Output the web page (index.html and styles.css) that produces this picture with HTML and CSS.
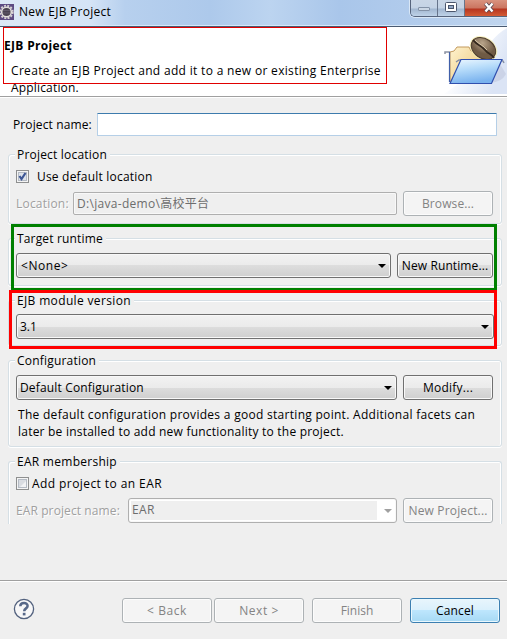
FILE: index.html
```
<!DOCTYPE html>
<html lang="en">
<head>
<meta charset="utf-8">
<title>New EJB Project</title>
<link rel="stylesheet" href="styles.css">
</head>
<body>
<div class="window">
  <header class="titlebar">
    <svg class="app-icon" width="14" height="16" viewBox="0 0 14 16"><rect width="14" height="16" fill="#5d4b82"/><circle cx="6.500" cy="8" r="6.300" fill="none" stroke="#d6d1d2" stroke-width="1.800" stroke-dasharray="2 1.300"/><circle cx="6.500" cy="8" r="4.800" fill="#4a4250" stroke="#e2dfdc" stroke-width="1.500"/><path d="M3 6.500h7M3 9h7" stroke="#625a6c"/></svg>
    <span class="title t-title">New EJB Project</span>
    <div class="captions">
      <span class="cap min"><i></i></span>
      <span class="cap max"><svg width="12" height="10" viewBox="0 0 12 10"><rect x=".5" y=".5" width="11" height="9" rx="1" fill="#fff" stroke="#4b566c"/><rect x="3.500" y="3.500" width="5" height="3" fill="#91a6c4" stroke="#4b566c"/></svg></span>
      <span class="cap close"><svg width="12" height="11" viewBox="0 0 12 11"><path d="M2.500 1.500L9.500 9.500M9.500 1.500L2.500 9.500" stroke="#554650" stroke-width="4"/><path d="M2.500 1.500L9.500 9.500M9.500 1.500L2.500 9.500" stroke="#fff" stroke-width="2.400"/></svg></span>
    </div>
  </header>
  <section class="banner">
    <div class="banner-text">
      <h1><span class="t-h1">EJB Project</span></h1>
      <p><span class="t-d1">Create an EJB Project and add it to a new or existing Enterprise</span><br><span class="t-d2">Application.</span></p>
    </div>
    <svg class="wizard" width="67" height="66" viewBox="0 0 67 66">
      <defs>
        <linearGradient id="bg" x1="0" y1="0" x2="1" y2=".5"><stop offset=".35" stop-color="#fff"/><stop offset="1" stop-color="#dbe4f5"/></linearGradient>
        <linearGradient id="tan" x1="0" y1="0" x2="1" y2="1"><stop stop-color="#fff3cf"/><stop offset="1" stop-color="#e9c477"/></linearGradient>
        <linearGradient id="blue" x1="0" y1="0" x2=".3" y2="1"><stop stop-color="#eef8ff"/><stop offset=".45" stop-color="#b7dcfa"/><stop offset="1" stop-color="#79b2ee"/></linearGradient>
        <radialGradient id="bean" cx=".35" cy=".3"><stop stop-color="#b9a58b"/><stop offset="1" stop-color="#6f5a44"/></radialGradient>
      </defs>
      <path d="M67 0V66H4Q38 44 50 15Q58 5 67 0" fill="url(#bg)"/>
      <path d="M50 55L60 36L66 46Q62 54 50 55" fill="#b9bfd8" opacity=".45"/>
      <path d="M5 26V24H10" stroke="#8c92a2" stroke-width="1.500" fill="none"/>
      <path d="M10 54V24L14 23L17 19H29L31 23H40V40L12 55Z" fill="url(#tan)" stroke="#c39a5e"/>
      <path d="M9.500 54V24" stroke="#405fa9" stroke-width="1.200"/>
      <path d="M16 34L19 32H22M60 32L63 33L64 35" stroke="#858ea3" stroke-width="1.500" fill="none"/>
      <ellipse cx="43.500" cy="20.500" rx="14.800" ry="11.300" transform="rotate(35 43.500 20.500)" fill="#f6edb1" opacity=".8"/>
      <ellipse cx="43.500" cy="20.500" rx="13.200" ry="9.800" transform="rotate(35 43.500 20.500)" fill="url(#bean)" stroke="#4d3d2e"/>
      <path d="M33 12C38 18 41 17 45 22C48 26 52 26 54 30" stroke="#33271c" stroke-width="1.800" fill="none"/>
      <path d="M35 12C40 17 43 17 47 22" stroke="#d8c8aa" fill="none"/>
      <path d="M21 31.500H62L51.500 55.500H10Z" fill="url(#blue)" stroke="#304fae" stroke-width="1.200"/>
    </svg>
  </section>
  <main class="content">
    <div class="row name-row">
      <label class="t-name">Project name:</label>
      <div class="input"></div>
    </div>
    <div class="group location">
      <div class="legend"><span class="t-ploc">Project location</span></div>
      <div class="check wide"><svg width="13" height="13" viewBox="0 0 13 13"><rect x=".5" y=".5" width="12" height="12" fill="#f4f4f4" stroke="#8e8f8f"/><rect x="2.500" y="2.500" width="8" height="8" fill="#dde2ea" stroke="#b5bbc4"/><path d="M3.500 6L5.500 9L9.500 3" fill="none" stroke="#3d5694" stroke-width="2.200"/></svg><span class="t-use">Use default location</span></div>
      <div class="row loc-row">
        <label class="off etched t-loc">Location:</label>
        <div class="input disabled"><span class="t-path">D:\java-demo\高校平台</span></div>
        <div class="btn off"><span class="t-browse">Browse...</span></div>
      </div>
    </div>
    <div class="group target">
      <div class="legend"><span class="t-target">Target runtime</span></div>
      <div class="row">
        <div class="combo runtime"><span class="t-none">&lt;None&gt;</span></div>
        <div class="btn new-runtime"><span class="t-newr">New Runtime...</span></div>
      </div>
    </div>
    <div class="group version">
      <div class="legend"><span class="t-ejb">EJB module version</span></div>
      <div class="row"><div class="combo ver"><span>3.1</span></div></div>
    </div>
    <div class="group config">
      <div class="legend"><span class="t-conf">Configuration</span></div>
      <div class="row">
        <div class="combo"><span class="t-def">Default Configuration</span></div>
        <div class="btn"><span class="t-mod">Modify...</span></div>
      </div>
      <p class="note"><span class="t-n1">The default configuration provides a good starting point. Additional facets can</span><br><span class="t-n2">later be installed to add new functionality to the project.</span></p>
    </div>
    <div class="group ear">
      <div class="legend"><span class="t-earm">EAR membership</span></div>
      <div class="check"><svg width="13" height="13" viewBox="0 0 13 13"><rect x=".5" y=".5" width="12" height="12" fill="#f4f4f4" stroke="#8e8f8f"/><rect x="2.500" y="2.500" width="8" height="8" fill="#d9dce1" stroke="#b5bbc4"/><path d="M10 4V10H4Z" fill="#f1f2f4"/></svg><span class="t-add">Add project to an EAR</span></div>
      <div class="row">
        <label class="off etched ear-label t-earn">EAR project name:</label>
        <div class="combo editable"><span class="field"><span class="t-ear">EAR</span></span></div>
        <div class="btn off"><span class="t-newp">New Project...</span></div>
      </div>
    </div>
    <div class="mark green"></div>
    <div class="mark red"></div>
  </main>
  <footer class="footer">
    <svg class="help" width="22" height="22" viewBox="0 0 22 22"><circle cx="11" cy="11" r="9.600" fill="#f7f7f8" stroke="#52617e" stroke-width="1.300"/><path d="M7.300 8.300C7.300 3.900 14.700 3.900 14.600 8C14.600 10.500 11.200 10.300 11.200 13.300" fill="none" stroke="#566788" stroke-width="2.500"/><rect x="9.800" y="14.800" width="2.700" height="2.600" fill="#566788"/></svg>
    <div class="btn off"><span class="t-back">&lt; Back</span></div>
    <div class="btn off next"><span class="t-next">Next &gt;</span></div>
    <div class="btn off finish"><span>Finish</span></div>
    <div class="btn cancel"><span class="t-can">Cancel</span></div>
  </footer>
  <div class="mark thin"></div>
</div>
</body>
</html>
```
FILE: styles.css
```
* { box-sizing: border-box; }
body { margin: 0; font: 12px/17px "Open Sans", "Noto Sans", "Noto Sans CJK SC", sans-serif; color: #000; }
svg { display: block; flex: none; }
span, label { white-space: nowrap; }
.window { position: relative; width: 507px; height: 639px; background: #efefef; display: flex; flex-direction: column; overflow: hidden; }

.titlebar { height: 27px; flex: none; display: flex; align-items: flex-start; border-bottom: 1px solid #4a5a71; background: linear-gradient(90deg, #dce8f6 0, #d5e4f6 90px, #b7d0ee 125px, #adc9eb 210px, #bcd4f0 270px, #a9c6ea 340px, #b2ccec 420px, #c0d5ee); box-shadow: inset 0 -1px #d7e7f8; }
.app-icon { margin-top: 4px; }
.title { margin: 3px 0 0 5px; }
.captions { display: flex; margin-left: auto; width: 97px; height: 17px; border: 1px solid #56647c; border-top: 0; border-right: 0; border-radius: 0 0 0 5px; overflow: hidden; box-shadow: 0 0 0 1px #d9e7f6; }
.cap { display: flex; justify-content: center; align-items: flex-start; padding-top: 2px; width: 27px; flex: none; background: linear-gradient(#c9d6e6 0, #c4d3e5 8px, #a2b7d0 9px, #bed2e8); border-right: 1px solid #67758b; }
.min { width: 27px; }
.min i { width: 12px; height: 4px; margin-top: 5px; border: 1px solid #8392a7; background: #cbd7e5; border-radius: 1px; }
.close { width: 48px; border: 0; background: linear-gradient(#d9937f 0, #cb7560 8px, #b63520 9px, #d35c35); }

.banner { height: 70px; flex: none; display: flex; justify-content: space-between; background: #fff; border-bottom: 1px solid #a0a0a0; }
.wizard { margin-top: 1px; }
h1 { margin: 10px 0 0 4px; font-size: 12px; line-height: 17px; }
.banner-text p { margin: 8px 0 0 11px; }

.content { position: relative; height: 483px; flex: none; padding: 15px 5px 0 8px; border-top: 1px solid #fff; }
.row { display: flex; gap: 6px; }
.name-row { width: 489px; align-items: center; padding-left: 5px; gap: 0; justify-content: space-between; }
.input { width: 400px; height: 23px; background: #fff; border: 1px solid #b5cfe7; border-top-color: #3d7bad; border-radius: 1px; }
.input.disabled { width: 324px; background: #efefef; border-color: #afafaf; color: #6d6d6d; padding: 2px 3px; box-shadow: inset 0 0 0 1px #f8f8f8; border-radius: 2px; }
.group { width: 494px; border: 1px solid #d5dfe5; border-radius: 3px; box-shadow: inset 1px 1px #fff, inset -1px 0 #fff, 0 1px #fff; padding-left: 7px; }
.legend { width: max-content; height: 17px; margin: -9px 0 0 -1px; padding: 0 3px 0 2px; background: #efefef; }
.location { margin-top: 18px; height: 70px; }
.target { margin-top: 14px; height: 48px; }
.version { margin-top: 14px; height: 46px; }
.config { margin-top: 14px; height: 87px; }
.ear { margin-top: 14px; height: 63px; border-bottom: 0; border-radius: 3px 3px 0 0; box-shadow: inset 1px 1px #fff, inset -1px 0 #fff; }
.check { display: flex; align-items: center; gap: 3px; height: 17px; margin-top: 5px; }
.check.wide { gap: 8px; }
.loc-row { margin-top: 6px; align-items: center; height: 25px; }
.target .row, .config .row { margin-top: 6px; }
.version .row { margin-top: 5px; }
.ear .row { margin-top: 6px; align-items: center; }
.etched { text-shadow: 1px 1px #fff; color: #a0a0a0; }

.btn { width: 90px; height: 25px; flex: none; display: flex; align-items: center; justify-content: center; border: 1px solid #707070; border-radius: 3px; background: linear-gradient(#f2f2f2, #ebebeb 50%, #dddddd 50%, #cfcfcf); box-shadow: inset 0 0 0 1px #f8f8f8; }
.btn.off { border-color: #adb2b5; background: #f4f4f4; color: #838383; box-shadow: inset 0 0 0 1px #fcfcfc; }
.combo { width: 381px; height: 25px; flex: none; display: flex; align-items: center; padding-left: 3px; border: 1px solid #707070; border-radius: 3px; background: linear-gradient(#f2f2f2, #ebebeb 50%, #dddddd 50%, #cfcfcf); box-shadow: inset 0 0 0 1px #f8f8f8; }
.combo::after { content: ""; margin: 1px 4px 0 auto; border: 4px solid transparent; border-top-color: #000; border-bottom: 0; }
.runtime { width: 375px; padding-left: 4px; }
.new-runtime { width: 96px; }
.ver { width: 478px; }
.loc-row, .ear .row { gap: 0; }
.loc-row label { width: 51px; margin-right: 6px; flex: none; }
.ear-label { width: 106px; margin-right: 6px; flex: none; }
.loc-row .btn, .ear .btn { margin-left: 6px; }
.editable { width: 269px; background: #fff; border-color: #afafaf; padding-left: 2px; color: #6d6d6d; }
.editable::after { border-top-color: #a0a0a0; }
.field { width: 246px; height: 19px; background: #efefef; padding-left: 1px; }

.note { margin: 6px 0 0 2px; }
.footer { flex: 1; display: flex; align-items: flex-start; padding-top: 16px; border-top: 1px solid #a0a0a0; box-shadow: inset 0 1px #fff; }
.help { margin: 1px 87px 0 13px; }
.footer .btn { margin-top: 1px; }
.footer .next { margin-left: 2px; }
.footer .finish, .footer .cancel { margin-left: 8px; }
.cancel { border-color: #3c7fb1; background: linear-gradient(#e8f5fc, #d9f0fc 50%, #bde6fd 50%, #a6d9f4); box-shadow: inset 0 0 0 1px #e9f8fe; }

/* Tracking per label */
.t-title { letter-spacing: .26px; }
.t-h1 { letter-spacing: .33px; }
.t-d1 { letter-spacing: .32px; }
.t-d2 { letter-spacing: .17px; }
.t-name { letter-spacing: .12px; }
.t-ploc, .t-use, .t-loc, .t-conf { letter-spacing: .2px; }
.t-path { letter-spacing: .3px; }
.t-browse, .t-newr, .t-earn { letter-spacing: .1px; }
.t-target, .t-def, .t-newp, .t-can { letter-spacing: .16px; }
.t-none, .t-back, .t-next { letter-spacing: .55px; }
.t-ejb { letter-spacing: .35px; }
.t-mod { letter-spacing: .25px; }
.t-n1 { letter-spacing: .29px; }
.t-n2 { letter-spacing: .22px; }
.t-earm { letter-spacing: .27px; }
.t-add, .t-ear { letter-spacing: .42px; }

.mark { position: absolute; pointer-events: none; }
.green { left: 11px; top: 126px; width: 486px; height: 67px; border: 3px solid #008000; }
.red { left: 9px; top: 192px; width: 488px; height: 59px; border: 3px solid #f00; }
.thin { left: 3px; top: 27px; width: 384px; height: 57px; border: 1px solid #e00000; }
```
